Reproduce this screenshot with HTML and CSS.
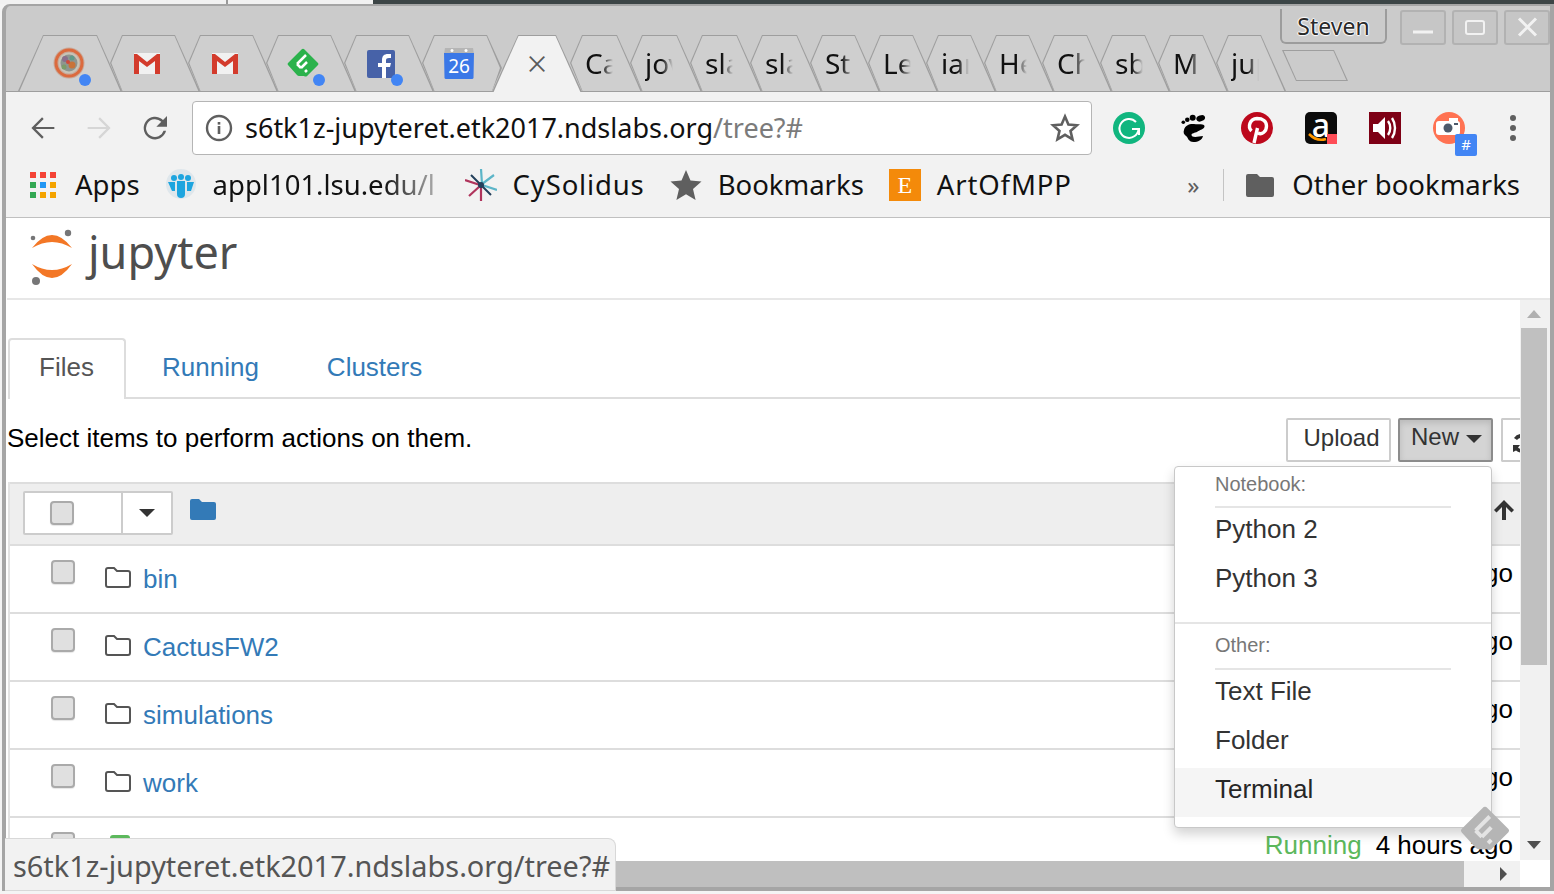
FILE: index.html
```html
<!DOCTYPE html>
<html lang="en">
<head>
<meta charset="utf-8">
<title>Jupyter</title>
<link rel="stylesheet" href="styles.css">
</head>
<body>
<div class="desk"><span class="desk-a"></span><span class="desk-b"></span><span class="desk-c"></span></div>
<div class="window">
  <div class="strip">
    <div class="tab tab-first">
      <svg class="fav" viewBox="0 0 32 32"><circle cx="16" cy="16" r="15.500" fill="#c9a898"/><circle cx="16" cy="16" r="13" fill="none" stroke="#db6a3e" stroke-width="3"/><circle cx="16" cy="16" r="10.500" fill="#c8c4b8"/><circle cx="16" cy="16" r="8.500" fill="#8f9590"/><circle cx="12" cy="12" r="3" fill="#8a6f8c"/><circle cx="19" cy="18" r="3.500" fill="#c9733a"/><circle cx="19" cy="11" r="2.500" fill="#5f9a8a"/><circle cx="11" cy="20" r="2.500" fill="#7b9c6a"/><circle cx="15" cy="15" r="2" fill="#d04a3a"/><circle cx="32" cy="33" r="6" fill="#4285f4"/></svg>
    </div>
    <div class="tab tab-wide">
      <svg class="fav" viewBox="0 0 32 32"><path d="M3 6h26v21H3z" fill="#f1f1f1"/><path d="M3 27V7h3l10 8 10-8h3v20h-5V14l-8 6-8-6v13z" fill="#d33b2c"/></svg>
    </div>
    <div class="tab tab-wide">
      <svg class="fav" viewBox="0 0 32 32"><path d="M3 6h26v21H3z" fill="#f1f1f1"/><path d="M3 27V7h3l10 8 10-8h3v20h-5V14l-8 6-8-6v13z" fill="#d33b2c"/></svg>
    </div>
    <div class="tab tab-wide">
      <svg class="fav" viewBox="0 0 32 32"><path d="M14.500 2.500a2 2 0 0 1 3 0L31 16a1.500 1.500 0 0 1 0 2L21 28a3 3 0 0 1-4 1h-5a3 3 0 0 1-2-1L1 18a1.500 1.500 0 0 1 0-2z" fill="#2bb24c"/><path d="M10 17L19 8M14 21l6-6M18 25l2-2M10 17l4 4" fill="none" stroke="#fff" stroke-width="2.500"/><circle cx="32" cy="33" r="6" fill="#4285f4"/></svg>
    </div>
    <div class="tab tab-wide">
      <svg class="fav" viewBox="0 0 32 32"><rect x="2" y="3" width="28" height="28" rx="2" fill="#4762a8"/><path d="M17 31V20h-4v-4h4v-3c0-4 2-6 6-6h3v4h-2c-2 0-3 .7-3 2.500V16h5l-1 4h-4v11z" fill="#fff"/><circle cx="32" cy="33" r="6" fill="#4285f4"/></svg>
    </div>
    <div class="tab tab-before">
      <svg class="fav" viewBox="0 0 32 32"><path d="M2 1h28l1 6H1z" fill="#b5b5b5"/><circle cx="9" cy="3.500" r="1.500" fill="#fff"/><circle cx="23" cy="3.500" r="1.500" fill="#fff"/><path d="M1 6h30l-.5 25a1.500 1.500 0 0 1-1.500 1H3a1.500 1.500 0 0 1-1.500-1z" fill="#3b78e7"/><text class="cal-day" x="16" y="26" text-anchor="middle">26</text></svg>
    </div>
    <div class="tab tab-active"><span class="x">×</span></div>
    <div class="tab tab-text"><span class="title">Ca</span></div>
    <div class="tab tab-text"><span class="title">jov</span></div>
    <div class="tab tab-text"><span class="title">sla</span></div>
    <div class="tab tab-text"><span class="title">sla</span></div>
    <div class="tab tab-text tab-tight"><span class="title">St</span></div>
    <div class="tab tab-text tab-tight"><span class="title">Le</span></div>
    <div class="tab tab-text tab-tight"><span class="title">ian</span></div>
    <div class="tab tab-text tab-tight"><span class="title">He</span></div>
    <div class="tab tab-text tab-tight"><span class="title">Ch</span></div>
    <div class="tab tab-text tab-tight"><span class="title">sb</span></div>
    <div class="tab tab-text tab-tight"><span class="title">M</span></div>
    <div class="tab tab-text tab-tight"><span class="title">jup</span></div>
    <div class="newtab"></div>
    <div class="wm">
      <span class="user">Steven</span>
      <span class="wbtn"><svg viewBox="0 0 42 30" class="wicon"><rect x="11" y="18" width="20" height="3" fill="#f2f2f2"/></svg></span>
      <span class="wbtn"><svg viewBox="0 0 42 30" class="wicon"><rect x="12" y="8.500" width="18" height="13" rx="2" fill="none" stroke="#f2f2f2" stroke-width="2"/></svg></span>
      <span class="wbtn"><svg viewBox="0 0 42 30" class="wicon"><path d="M13 6l17 17M30 6L13 23" stroke="#f2f2f2" stroke-width="3"/></svg></span>
    </div>
  </div>

  <div class="toolbar">
    <span class="nav"><svg viewBox="0 0 24 24"><path d="M20.500 11.200H6.500l6-6L11.300 4 3.300 12l8 8 1.200-1.200-6-6h14z" fill="#5f5f5f"/></svg></span>
    <span class="nav"><svg viewBox="0 0 24 24"><path d="M3.500 11.200h14l-6-6L12.700 4l8 8-8 8-1.200-1.200 6-6h-14z" fill="#d6d6d6"/></svg></span>
    <span class="nav"><svg viewBox="0 0 24 24"><path d="M18 6A8.500 8.500 0 1 0 20.300 14h-1.900A6.700 6.700 0 1 1 16.700 7.300L13 11h8V3z" fill="#5f5f5f"/></svg></span>
    <div class="omni">
      <svg class="info" viewBox="0 0 28 28"><circle cx="14" cy="14" r="12" fill="none" stroke="#5f5f5f" stroke-width="2.400"/><rect x="12.700" y="12" width="2.600" height="8" fill="#5f5f5f"/><rect x="12.700" y="8" width="2.600" height="2.600" fill="#5f5f5f"/></svg>
      <span class="url">s6tk1z-jupyteret.etk2017.ndslabs.org<span class="url-path">/tree?#</span></span>
      <svg class="star" viewBox="0 0 30 30"><path d="M15 3.500l3.400 8 8.600.7-6.500 5.700 2 8.400L15 21.800l-7.500 4.500 2-8.400L3 12.200l8.600-.7z" fill="none" stroke="#5f5f5f" stroke-width="2.600"/></svg>
    </div>
    <div class="exts">
      <span class="ext"><svg viewBox="0 0 32 32"><circle cx="16" cy="16" r="16" fill="#11b67f"/><path d="M23 10a9.500 9.500 0 1 0 2.500 6.500" fill="none" stroke="#fff" stroke-width="2"/><path d="M19 17h7v6" fill="none" stroke="#fff" stroke-width="2"/></svg></span>
      <span class="ext"><svg viewBox="0 0 32 32"><circle cx="6.300" cy="10.300" r="1.800" fill="#000"/><circle cx="10.300" cy="7.700" r="2.300" fill="#000"/><circle cx="15.700" cy="5.700" r="3" fill="#000"/><ellipse cx="23.700" cy="6.300" rx="4.500" ry="3" transform="rotate(-20 23.700 6.300)" fill="#000"/><path d="M7 18C8 13 13 11.500 17 12c5 .5 10-.5 10.500 2C28 17 22 18 20 20c-2 1-5.500 1-5.500 3 0 2 3.500 2.500 7.500 1.500l4-.5c-1 4-5 6-9.500 6C11 30 11 25 9 24c-2-1.500-3-3.500-2-6z" fill="#000"/></svg></span>
      <span class="ext"><svg viewBox="0 0 32 32"><circle cx="16" cy="16" r="16" fill="#bd081c"/><path d="M13 31l3.500-15M10.500 19c-4-4-2-12 5.500-12.500 6 0 9.500 3 9.500 7.500 0 6-5 9-8.500 7" fill="none" stroke="#fff" stroke-width="3.400"/></svg></span>
      <span class="ext amazon"><span class="amazon-a">a</span><svg class="amazon-mark" viewBox="0 0 32 32"><path d="M4 22c5 5 11 7 17 5" fill="none" stroke="#f90" stroke-width="2.500"/><rect x="22" y="22" width="10" height="10" fill="#ff4d57"/></svg></span>
      <span class="ext"><svg viewBox="0 0 32 32"><rect width="32" height="32" fill="#7e0015"/><path d="M4 12h5l7-7v22l-7-7H4z" fill="#fff"/><path d="M19 9c3 4 3 10 0 14M23 6c4 6 4 14 0 20" fill="none" stroke="#fff" stroke-width="2.400"/></svg></span>
      <span class="ext camera"><svg viewBox="0 0 32 32"><circle cx="16" cy="16" r="16" fill="#ff7252"/><rect x="3" y="9" width="24" height="14" rx="3" fill="#fff"/><rect x="16" y="6" width="9" height="4" fill="#fff"/><circle cx="15" cy="16" r="4.500" fill="#4d5a6b"/><rect x="21" y="11" width="4" height="2" fill="#4d5a6b"/></svg><span class="badge">#</span></span>
      <span class="ext"><svg viewBox="0 0 32 32"><circle cx="16" cy="6" r="3" fill="#5f5f5f"/><circle cx="16" cy="16" r="3" fill="#5f5f5f"/><circle cx="16" cy="26" r="3" fill="#5f5f5f"/></svg></span>
    </div>
  </div>

  <div class="bookmarks">
    <span class="bm">
      <svg class="bm-icon" viewBox="0 0 32 32"><rect x="3" y="3" width="6" height="6" fill="#f44336"/><rect x="13" y="3" width="6" height="6" fill="#f44336"/><rect x="23" y="3" width="6" height="6" fill="#f44336"/><rect x="3" y="13" width="6" height="6" fill="#34a853"/><rect x="13" y="13" width="6" height="6" fill="#2196f3"/><rect x="23" y="13" width="6" height="6" fill="#f4a300"/><rect x="3" y="23" width="6" height="6" fill="#34a853"/><rect x="13" y="23" width="6" height="6" fill="#f4a300"/><rect x="23" y="23" width="6" height="6" fill="#f4a300"/></svg>
      Apps
    </span>
    <span class="bm">
      <svg class="bm-icon" viewBox="0 0 32 32"><circle cx="16" cy="15" r="15" fill="#dfe7ec"/><circle cx="16" cy="8" r="3" fill="#1ea5df"/><circle cx="9" cy="9" r="3" fill="#1ea5df"/><circle cx="23" cy="9" r="3" fill="#1ea5df"/><path d="M12 12h8v13a4 4 0 0 1-8 0z" fill="#1ea5df"/><path d="M3 13h7v9H7zM22 13h7l-3 9h-4z" fill="#1ea5df"/></svg>
      <span class="bm-cut">appl101.lsu.edu/l</span>
    </span>
    <span class="bm">
      <svg class="bm-icon" viewBox="0 0 32 32"><path d="M16 0l1 15M29 6L17 15M32 21l-15-5" stroke="#5cb5c8" stroke-width="2.200" fill="none"/><path d="M16 32V17M4 27l11-10M0 11l15 5" stroke="#b0345c" stroke-width="2.200" fill="none"/><circle cx="16" cy="16" r="3" fill="#24405c"/><path d="M6 6l9 9M26 26l-9-9" stroke="#24405c" stroke-width="2"/></svg>
      <span class="bm-roomy">CySolidus</span>
    </span>
    <span class="bm">
      <svg class="bm-icon" viewBox="0 0 32 32"><path d="M16 1l4.500 10.500 11 1-8.500 7.500 2.600 11L16 25.200 6.400 31 9 20 .5 12.500l11-1z" fill="#5f5f5f"/></svg>
      Bookmarks
    </span>
    <span class="bm">
      <span class="etsy">E</span>
      <span class="bm-roomy">ArtOfMPP</span>
    </span>
    <span class="more">»</span>
    <span class="bm-sep"></span>
    <span class="bm bm-other">
      <svg class="folder-icon" viewBox="0 0 28 24"><path d="M0 3a2 2 0 0 1 2-2h9l3 3h12a2 2 0 0 1 2 2v16a2 2 0 0 1-2 2H2a2 2 0 0 1-2-2z" fill="#5f5f5f"/></svg>
      Other bookmarks
    </span>
  </div>

  <div class="page">
    <header class="jp-header">
      <svg class="jp-logo" viewBox="0 0 48 58"><path d="M4 19Q24-7 44 19 24 7 4 19z" fill="#f37726"/><path d="M4 35Q24 63 44 35 24 47 4 35z" fill="#f37726"/><circle cx="5" cy="9" r="2.300" fill="#767677"/><circle cx="40" cy="4" r="3.200" fill="#767677"/><circle cx="8" cy="52" r="4" fill="#767677"/></svg>
      <span class="jp-word">jupyter</span>
    </header>
    <div class="scroller">
      <main class="main">
        <nav class="nav-tabs">
          <a class="nav-tab nav-tab-on">Files</a>
          <a class="nav-tab">Running</a>
          <a class="nav-tab">Clusters</a>
        </nav>
        <div class="tools">
          <span class="hint">Select items to perform actions on them.</span>
          <button class="btn">Upload</button>
          <button class="btn btn-on">New<span class="caret"></span></button>
          <button class="btn btn-refresh"><svg viewBox="0 0 20 20"><path d="M9 0a9 9 0 0 0-7 4l3 2a5 5 0 0 1 4-2zM1 11h7l-2 2.500a4 4 0 0 0 3 1.500v3.500a8 8 0 0 1-5-2L1 18z" fill="#333"/></svg></button>
        </div>
        <section class="list">
          <div class="list-head">
            <span class="selector"><span class="selector-box"><span class="cb"></span></span><span class="selector-caret"><span class="caret caret-dark"></span></span></span>
            <svg class="head-folder" viewBox="0 0 26 22"><path d="M0 3a2 2 0 0 1 2-2h7l3 3h12a2 2 0 0 1 2 2v14a2 2 0 0 1-2 2H2a2 2 0 0 1-2-2z" fill="#337ab7"/></svg>
            <svg class="head-arrow" viewBox="0 0 22 22"><path d="M11 1l10 10-2.500 2.500L13 8v13H9V8l-5.500 5.500L1 11z" fill="#333"/></svg>
          </div>
          <div class="row"><span class="cb"></span><svg class="folder" viewBox="0 0 26 22"><path d="M1 4a2 2 0 0 1 2-2h6l3 3h11a2 2 0 0 1 2 2v12a2 2 0 0 1-2 2H3a2 2 0 0 1-2-2z" fill="none" stroke="#555" stroke-width="2"/></svg><a class="link">bin</a><span class="ago">4 hours ago</span></div>
          <div class="row"><span class="cb"></span><svg class="folder" viewBox="0 0 26 22"><path d="M1 4a2 2 0 0 1 2-2h6l3 3h11a2 2 0 0 1 2 2v12a2 2 0 0 1-2 2H3a2 2 0 0 1-2-2z" fill="none" stroke="#555" stroke-width="2"/></svg><a class="link">CactusFW2</a><span class="ago">4 hours ago</span></div>
          <div class="row"><span class="cb"></span><svg class="folder" viewBox="0 0 26 22"><path d="M1 4a2 2 0 0 1 2-2h6l3 3h11a2 2 0 0 1 2 2v12a2 2 0 0 1-2 2H3a2 2 0 0 1-2-2z" fill="none" stroke="#555" stroke-width="2"/></svg><a class="link">simulations</a><span class="ago">4 hours ago</span></div>
          <div class="row"><span class="cb"></span><svg class="folder" viewBox="0 0 26 22"><path d="M1 4a2 2 0 0 1 2-2h6l3 3h11a2 2 0 0 1 2 2v12a2 2 0 0 1-2 2H3a2 2 0 0 1-2-2z" fill="none" stroke="#555" stroke-width="2"/></svg><a class="link">work</a><span class="ago">4 hours ago</span></div>
          <div class="row"><span class="cb"></span><span class="nb-icon"></span><span class="running">Running</span><span class="ago ago-last">4 hours ago</span></div>
        </section>
        <div class="menu">
          <div class="menu-label menu-label-first">Notebook:</div>
          <div class="menu-rule"></div>
          <div class="menu-item">Python 2</div>
          <div class="menu-item">Python 3</div>
          <div class="menu-div"></div>
          <div class="menu-label">Other:</div>
          <div class="menu-rule"></div>
          <div class="menu-item">Text File</div>
          <div class="menu-item">Folder</div>
          <div class="menu-item menu-item-hover">Terminal</div>
        </div>
        <svg class="feedly-float" viewBox="0 0 32 32"><path d="M14.500 2.500a2 2 0 0 1 3 0L31 16a1.500 1.500 0 0 1 0 2L21 28a3 3 0 0 1-4 1h-5a3 3 0 0 1-2-1L1 18a1.500 1.500 0 0 1 0-2z" fill="#b5b5b5"/><path d="M10 17L19 8M14 21l6-6M18 25l2-2M10 17l4 4" fill="none" stroke="#e4e4e4" stroke-width="2.500"/></svg>
      </main>
      <div class="vbar">
        <span class="arrow-up"></span>
        <span class="vthumb"></span>
        <span class="arrow-down"></span>
      </div>
    </div>
    <div class="hbar">
      <span class="hthumb"></span>
      <span class="hend"><span class="arrow-right"></span></span>
      <span class="hcorner"></span>
    </div>
    <div class="status">s6tk1z-jupyteret.etk2017.ndslabs.org/tree?#</div>
  </div>
</div>
</body>
</html>
```
FILE: styles.css
```css
* { box-sizing: border-box; }
html, body { margin: 0; height: 100%; overflow: hidden; }
body { background: #f4f4f4; font-family: "Noto Sans", sans-serif; color: #111; width: 1554px; height: 894px; }

.desk { display: flex; height: 4px; }
.desk-a { width: 226px; background: #f2f2f2; }
.desk-b { width: 147px; background: #f2f2f2; border-left: 2px solid #999; }
.desk-c { flex: 1; background: #3c4546; }

.window {
  margin-left: 2px;
  height: 887px;
  display: flex;
  flex-direction: column;
  border: solid #a5a5a5;
  border-width: 2px 4px 4px 4px;
  border-top-left-radius: 8px;
  background: #cbcbcb;
  position: relative;
}

/* tab strip */
.strip {
  position: relative;
  height: 86px;
  display: flex;
  align-items: flex-end;
  padding-left: 12px;
  border-bottom: 1px solid #9e9e9e;
  flex-shrink: 0;
}
.tab {
  position: relative;
  height: 56px;
  flex-shrink: 0;
  display: flex;
  align-items: center;
  background: #9e9e9e;
  margin-left: -12px;
  clip-path: polygon(0 28px, 12px 0, calc(100% - 25px) 0, 100% 56px, 12px 56px);
}
.tab::before {
  content: "";
  position: absolute;
  inset: 0;
  background: #cfcfcf;
  clip-path: polygon(1.300px 28px, 12.600px 1px, calc(100% - 25.500px) 1px, calc(100% - 1.600px) 56px, 12.500px 56px);
}
.tab > * { position: relative; }
.tab-first { width: 104px; margin-left: 0; padding-left: 35px; clip-path: polygon(0 56px, 25px 0, calc(100% - 25px) 0, 100% 56px); }
.tab-first::before { clip-path: polygon(1.600px 56px, 25.500px 1px, calc(100% - 25.500px) 1px, calc(100% - 1.600px) 56px); }
.tab-wide { width: 90px; padding-left: 21px; }
.tab-before { width: 80px; padding-left: 21px; clip-path: polygon(0 28px, 12px 0, 65px 0, 80px 33px, 70px 56px, 12px 56px); }
.tab-before::before { clip-path: polygon(1.300px 28px, 12.600px 1px, 64.500px 1px, 78px 33px, 70px 56px, 12.500px 56px); }
.tab-active {
  width: 90px;
  height: 57px;
  margin-left: -10px;
  margin-bottom: -1px;
  justify-content: center;
  clip-path: polygon(0 57px, 26px 0, calc(100% - 26px) 0, 100% 57px);
}
.tab-active::before { background: #f2f2f2; clip-path: polygon(1.600px 57px, 26.500px 1px, calc(100% - 26.500px) 1px, calc(100% - 1.600px) 57px); }
.tab-text { width: 72px; padding-left: 15px; font-size: 28px; color: #111; }
.tab-tight { width: 70px; }
.title {
  display: block;
  width: 28px;
  overflow: hidden;
  white-space: nowrap;
  -webkit-mask-image: linear-gradient(90deg, #000 60%, transparent);
  mask-image: linear-gradient(90deg, #000 60%, transparent);
}
.fav { width: 32px; height: 32px; display: block; overflow: visible; }
.x { font-size: 36px; line-height: 1; color: #5a5a5a; font-weight: 300; }
.cal-day { font-family: "Noto Sans", sans-serif; font-size: 19px; fill: #fff; }

.newtab {
  width: 66px;
  height: 31px;
  margin-left: -4px;
  margin-bottom: 10px;
  flex-shrink: 0;
  background: #9e9e9e;
  clip-path: polygon(0 0, 52px 0, 100% 100%, 14px 100%);
  position: relative;
}
.newtab::before {
  content: "";
  position: absolute;
  inset: 0;
  background: #cbcbcb;
  clip-path: polygon(1.700px 1px, 51.400px 1px, calc(100% - 1.700px) calc(100% - 1px), 14.600px calc(100% - 1px));
}
.wm { position: absolute; top: 3px; right: 0; display: flex; align-items: flex-start; gap: 6px; }
.user {
  width: 107px;
  height: 35px;
  margin-right: 7px;
  border: 2px solid #9c9c9c;
  border-top: 0;
  border-radius: 0 0 6px 6px;
  font-size: 23px;
  line-height: 34px;
  text-align: center;
  color: #2a2a2a;
  text-shadow: 1px 0 1px #fff, -1px 0 1px #fff, 0 1px 1px #fff, 0 -1px 1px #fff;
}
.wbtn { width: 46px; height: 35px; border: 2px solid #b2b2b2; border-radius: 3px; background: #c6c6c6; margin-top: 1px; display: block; }
.wicon { display: block; width: 42px; height: 31px; }

/* toolbar */
.toolbar {
  height: 68px;
  flex-shrink: 0;
  background: #f2f2f2;
  display: flex;
  align-items: center;
  padding-left: 15px;
}
.nav { width: 44px; margin-right: 12px; margin-top: 4px; display: flex; justify-content: center; }
.nav svg { width: 32px; height: 32px; display: block; }
.omni {
  width: 900px;
  height: 54px;
  margin-left: 3px;
  margin-top: 3px;
  background: #fff;
  border: 1px solid #b5b5b5;
  border-radius: 4px;
  display: flex;
  align-items: center;
  padding-left: 12px;
  padding-right: 11px;
}
.info { width: 28px; height: 28px; flex-shrink: 0; }
.url { margin-left: 12px; font-size: 27px; white-space: nowrap; color: #111; }
.url-path { color: #7b7b7b; }
.star { width: 30px; height: 30px; margin-left: auto; }
.exts { display: flex; margin-left: 5px; margin-top: 4px; }
.ext { position: relative; width: 64px; height: 32px; display: flex; justify-content: center; }
.ext > svg { width: 32px; height: 32px; display: block; }
.amazon-a {
  width: 32px; height: 32px; background: #0b0b0b; border-radius: 5px; color: #fff;
  font-size: 32px; line-height: 26px; text-align: center; font-weight: 500;
}
.ext > .amazon-mark { position: absolute; left: 16px; top: 0; }
.badge {
  position: absolute; left: 38px; top: 22px;
  width: 22px; height: 22px; border-radius: 2px; background: #4285f4;
  color: #fff; font-size: 15px; line-height: 21px; text-align: center;
}

/* bookmarks */
.bookmarks {
  height: 58px;
  flex-shrink: 0;
  background: #f2f2f2;
  border-bottom: 1px solid #c0c0c0;
  display: flex;
  align-items: center;
  padding: 0 30px 8px 21px;
  font-size: 27.500px;
  white-space: nowrap;
  color: #111;
}
.bm { display: flex; align-items: center; gap: 16px; margin-right: 25px; }
.bm-icon { width: 32px; height: 32px; flex-shrink: 0; display: block; }
.bm-roomy { letter-spacing: .85px; }
.bm-cut {
  width: 227px;
  overflow: hidden;
  -webkit-mask-image: linear-gradient(90deg, #000 75%, rgba(0,0,0,.25));
  mask-image: linear-gradient(90deg, #000 75%, rgba(0,0,0,.25));
}
.etsy {
  width: 32px; height: 32px; background: #f48a0a; color: #fff; display: block;
  font-family: "Liberation Serif", serif; font-size: 24px; line-height: 32px; text-align: center;
}
.more { margin-left: auto; font-size: 24px; color: #5f5f5f; margin-right: 24px; }
.bm-sep { width: 1px; height: 32px; background: #c4c4c4; margin-right: 22px; }
.bm-other { margin-right: 0; gap: 18px; }
.folder-icon { width: 28px; height: 24px; display: block; }

/* page */
.page { position: relative; flex: 1; min-height: 0; background: #fff; display: flex; flex-direction: column; font-family: "Liberation Sans", sans-serif; color: #000; }
.jp-header {
  height: 82px;
  flex-shrink: 0;
  border-bottom: 2px solid #e7e7e7;
  margin-left: 1px;
  display: flex;
  align-items: flex-start;
  padding: 11px 0 0 21px;
}
.jp-logo { width: 48px; height: 58px; display: block; flex-shrink: 0; }
.jp-word { font-family: "Noto Sans", sans-serif; font-size: 45px; line-height: 46px; color: #4e4e4e; margin-left: 12px; }
.scroller { height: 560px; flex-shrink: 0; display: flex; }
.main { position: relative; width: 1514px; overflow: hidden; flex-shrink: 0; padding-top: 38px; }
.nav-tabs { display: flex; height: 61px; border-bottom: 2px solid #ddd; margin-left: 2px; }
.nav-tab { height: 61px; padding: 0 34px; font-size: 26px; line-height: 58px; color: #337ab7; }
.nav-tab-on {
  width: 118px;
  padding: 0 0 0 29px;
  margin-right: 2px;
  line-height: 54px;
  color: #555;
  background: #fff;
  border: 2px solid #ddd;
  border-bottom: 0;
  border-radius: 4px 4px 0 0;
}
.tools { display: flex; align-items: flex-start; margin: 19px 0 20px 1px; height: 44px; }
.hint { font-size: 26px; line-height: 41px; margin-right: auto; }
.btn {
  height: 44px;
  background: #fff;
  border: 2px solid #ccc;
  border-radius: 2px;
  font-family: "Liberation Sans", sans-serif;
  font-size: 24px;
  color: #333;
  flex-shrink: 0;
  padding: 0 0 4px 6px;
}
.btn:nth-of-type(1) { width: 105px; margin-right: 7px; }
.btn-on {
  width: 95px;
  margin-right: 8px;
  background: #d4d4d4;
  border-color: #8c8c8c;
  box-shadow: inset 0 3px 6px rgba(0,0,0,.125);
  text-align: left;
  padding: 0 0 6px 11px;
}
.btn-refresh { width: 19px; border-right: 0; overflow: hidden; padding: 8px 0 0 9px; border-radius: 2px 0 0 2px; }
.btn-refresh svg { width: 20px; height: 20px; display: block; }
.caret { display: inline-block; margin-left: 7px; vertical-align: middle; border-top: 8px solid #333; border-left: 8px solid transparent; border-right: 8px solid transparent; }
.caret-dark { margin: 0; }
.list { margin-left: 2px; border-left: 2px solid #e3e3e3; }
.list-head {
  height: 64px;
  background: #eee;
  border-top: 2px solid #ddd;
  border-bottom: 2px solid #ddd;
  display: flex;
  align-items: center;
  padding-left: 13px;
  padding-right: 5px;
}
.selector { display: flex; width: 150px; height: 44px; margin-top: -2px; border: 2px solid #ccc; background: #fff; border-radius: 2px; }
.selector-box { width: 98px; border-right: 2px solid #ccc; display: flex; align-items: center; padding-left: 25px; }
.selector-caret { flex: 1; display: flex; align-items: center; justify-content: center; }
.head-folder { width: 26px; height: 22px; margin-left: 17px; margin-top: -10px; }
.head-arrow { width: 22px; height: 22px; margin-left: auto; margin-top: -8px; }
.cb { display: block; width: 24px; height: 24px; border: 2px solid #aaa; border-radius: 4px; background: #e0e0e0; box-shadow: 0 1px 1px rgba(0,0,0,.1); flex-shrink: 0; }
.row { position: relative; height: 68px; border-bottom: 2px solid #ddd; display: flex; align-items: flex-start; padding: 14px 7px 0 41px; }
.folder { width: 26px; height: 22px; margin: 6px 0 0 30px; flex-shrink: 0; }
.link { font-size: 26px; color: #337ab7; margin-left: 12px; line-height: 38px; }
.ago { margin-left: auto; margin-top: -1px; font-size: 26px; line-height: 28px; white-space: nowrap; }
.ago-last { margin-left: 14px; }
.nb-icon { width: 20px; height: 20px; margin: 3px 0 0 35px; border-radius: 3px; background: #5cb85c; }
.running { margin-left: auto; color: #5cb85c; font-size: 26px; line-height: 28px; margin-top: -1px; }

/* dropdown */
.menu {
  position: absolute;
  left: 1168px;
  top: 166px;
  width: 318px;
  height: 362px;
  background: #fff;
  border: 1px solid #c8c8c8;
  border-radius: 4px;
  box-shadow: 0 6px 12px rgba(0,0,0,.175);
}
.menu-label { height: 44px; padding-left: 40px; font-size: 20px; line-height: 42px; color: #777; }
.menu-label-first { height: 39px; line-height: 35px; }
.menu-rule { height: 2px; width: 236px; margin-left: 40px; background: #e5e5e5; }
.menu-item { height: 49px; padding-left: 40px; font-size: 26px; line-height: 43px; color: #333; }
.menu-item-hover { background: #f5f5f5; color: #262626; }
.menu-div { height: 2px; margin-top: 16px; background: #e5e5e5; }
.feedly-float { position: absolute; left: 1454px; top: 504px; width: 50px; height: 50px; }

/* scrollbars */
.vbar { position: relative; width: 30px; background: #f1f1f1; flex-shrink: 0; display: flex; flex-direction: column; align-items: center; padding-right: 2px; }
.arrow-up { margin-top: 10px; border-bottom: 8px solid #b0b0b0; border-left: 7px solid transparent; border-right: 7px solid transparent; }
.vthumb { width: 26px; height: 337px; margin-top: 10px; background: #c0c0c0; }
.arrow-down { margin-top: auto; margin-bottom: 11px; border-top: 8px solid #505050; border-left: 7px solid transparent; border-right: 7px solid transparent; }
.hbar { flex: 1; display: flex; background: #fff; padding-top: 1px; }
.hthumb { flex: 1; background: #bfbfbf; }
.hend { width: 56px; background: #f1f1f1; display: flex; align-items: center; padding-left: 36px; }
.arrow-right { border-left: 7px solid #505050; border-top: 7px solid transparent; border-bottom: 7px solid transparent; }
.hcorner { width: 30px; background: #fff; }

/* status bubble */
.status {
  position: absolute;
  left: -1px;
  bottom: -4px;
  width: 611px;
  height: 53px;
  padding-left: 8px;
  background: #f2f2f2;
  border: 1px solid #d8d8d8;
  border-left: 0;
  border-radius: 0 8px 0 0;
  font-family: "Noto Sans", sans-serif;
  font-size: 28.900px;
  line-height: 54px;
  white-space: nowrap;
  color: #555;
}
```
